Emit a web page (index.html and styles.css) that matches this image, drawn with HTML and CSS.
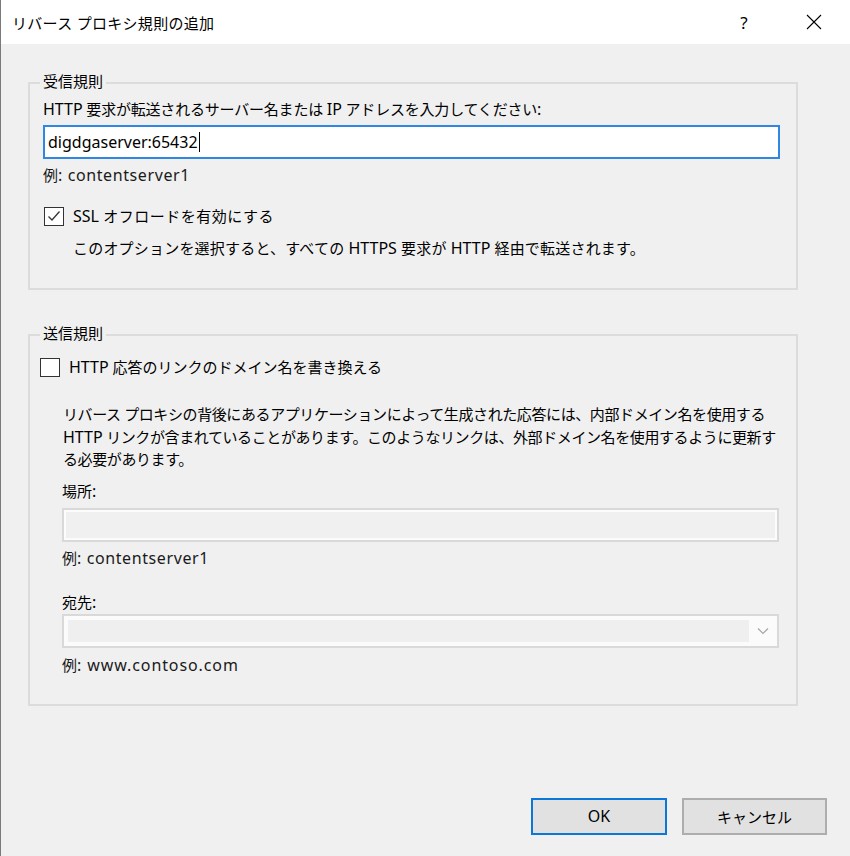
FILE: index.html
```html
<!DOCTYPE html>
<html lang="ja">
<head>
    <meta charset="UTF-8">
    <title>リバース プロキシ規則の追加</title>
    <link rel="stylesheet" href="styles.css">
</head>
<body>
    <div class="dialog">
        <div class="titlebar">
            <span class="tb-title">リバース プロキシ規則の追加</span>
            <span class="tb-help">?</span>
            <span class="tb-close">
                <svg width="16" height="16" viewBox="0 0 16 16"><path d="M1 1L15 15M15 1L1 15" stroke="#000" stroke-width="1.1" fill="none"/></svg>
            </span>
        </div>
        <div class="content">
            <fieldset class="group group-in">
                <legend>受信規則</legend>
                <p class="row lbl"><span class="en">HTTP</span> 要求が転送されるサーバー名または <span class="en">IP</span> アドレスを入力してください<span class="en">:</span></p>
                <div class="input active"><span class="en">digdgaserver:65432</span><span class="caret"></span></div>
                <p class="row hint">例<span class="en">: contentserver1</span></p>
                <div class="row check check-ssl">
                    <span class="box">
                        <svg width="14" height="14" viewBox="0 0 14 14"><path d="M1.5 7.5L5 11L12.5 2.5" stroke="#333" stroke-width="1.3" fill="none"/></svg>
                    </span>
                    <span><span class="en">SSL</span> オフロードを有効にする</span>
                </div>
                <p class="row desc">このオプションを選択すると、すべての <span class="en">HTTPS</span> 要求が <span class="en">HTTP</span> 経由で転送されます。</p>
            </fieldset>

            <fieldset class="group group-out">
                <legend>送信規則</legend>
                <div class="row check check-rw">
                    <span class="box"></span>
                    <span><span class="en">HTTP</span> 応答のリンクのドメイン名を書き換える</span>
                </div>
                <div class="indent">
                    <p class="para">リバース プロキシの背後にあるアプリケーションによって生成された応答には、内部ドメイン名を使用する<br><span class="en">HTTP</span> リンクが含まれていることがあります。このようなリンクは、外部ドメイン名を使用するように更新す<br>る必要があります。</p>
                    <p class="row lbl-loc">場所<span class="en">:</span></p>
                    <div class="input disabled"></div>
                    <p class="row hint hint-loc">例<span class="en">: contentserver1</span></p>
                    <p class="row lbl-dst">宛先<span class="en">:</span></p>
                    <div class="select">
                        <div class="sel-field"></div>
                        <svg class="sel-arrow" width="12" height="8" viewBox="0 0 12 8"><path d="M1 1.5L6 6.5L11 1.5" stroke="#a6a6a6" stroke-width="1.2" fill="none"/></svg>
                    </div>
                    <p class="row hint hint-dst">例<span class="en">: www.contoso.com</span></p>
                </div>
            </fieldset>

            <div class="footer">
                <a href="#" class="btn btn-ok"><span class="en">OK</span></a>
                <a href="#" class="btn">キャンセル</a>
            </div>
        </div>
    </div>
</body>
</html>
```

FILE: styles.css
```css
html, body {
    margin: 0;
    padding: 0;
}

body {
    font-family: "Noto Sans", "Noto Sans CJK JP", sans-serif;
    font-size: 15px;
    color: #000;
    background-color: #f0f0f0;
}

p {
    margin: 0;
}

a {
    color: #000;
    text-decoration: none;
}

/* latin runs are set a little larger than the kana/kanji */
.en {
    font-size: 16px;
    letter-spacing: 0;
}

.dialog {
    width: 849px;
    height: 856px;
    border-left: 1px solid #7a7a7a;
    background-color: #f0f0f0;
}

.titlebar {
    display: flex;
    align-items: center;
    height: 44px;
    padding-left: 11px;
    background-color: #fff;
}

.tb-title {
    flex: 1;
    font-size: 15px;
    letter-spacing: 0.3px;
}

.tb-help {
    width: 70px;
    margin-left: 4px;
    text-align: center;
    font-size: 17px;
}

.tb-close {
    display: flex;
    justify-content: center;
    width: 70px;
    margin-right: 1px;
}

.content {
    padding: 27px 0 0 27px;
}

.group {
    box-sizing: border-box;
    width: 770px;
    margin: 0;
    border: 2px solid #dcdcdc;
}

.group legend {
    padding: 0 3px 4px;
    line-height: 20px;
    font-size: 15px;
}

.group-in {
    padding: 0 16px 30px 13px;
}

.group-in legend {
    margin-left: -3px;
}

.group-out {
    margin-top: 33px;
    padding: 0 17px 29px 10px;
}

.row {
    line-height: 20px;
    white-space: nowrap;
}

.lbl {
    margin-top: 4px;
    letter-spacing: -0.2px;
}

.input {
    box-sizing: border-box;
    height: 34px;
    border: 2px solid #d9d9d9;
}

.input.active {
    display: flex;
    align-items: center;
    margin-top: 6px;
    padding-left: 3px;
    border-color: #2f87e3;
    background-color: #fff;
}

.caret {
    display: inline-block;
    width: 1px;
    height: 20px;
    margin-left: 1px;
    background-color: #000;
}

.input.disabled {
    margin-top: 7px;
    background-color: #f0f0f0;
    box-shadow: inset 0 0 0 2px #fcfcfc;
}

.hint {
    margin-top: 6px;
    color: #1a1a1a;
}

.hint .en {
    letter-spacing: 0.6px;
}

.hint-dst .en {
    letter-spacing: 0.9px;
}

.check {
    display: flex;
    align-items: center;
}

.check .box {
    box-sizing: border-box;
    display: flex;
    align-items: center;
    justify-content: center;
    width: 20px;
    height: 19px;
    border: 1px solid #333;
    background-color: #fff;
}

.check-ssl {
    margin-top: 21px;
    margin-left: 1px;
    letter-spacing: 0.5px;
}

.check-ssl .box {
    margin-right: 9px;
}

.check-rw {
    margin-top: 10px;
}

.check-rw .box {
    margin-right: 9px;
}

.desc {
    margin-top: 12px;
    padding-left: 30px;
    letter-spacing: 0.2px;
}

.indent {
    padding-left: 22px;
}

.para {
    margin-top: 26px;
    padding-left: 1px;
    line-height: 22.5px;
    white-space: nowrap;
    letter-spacing: -0.4px;
}

.lbl-loc {
    margin-top: 10px;
}

.hint-loc {
    margin-top: 6px;
}

.lbl-dst {
    margin-top: 24px;
}

.select {
    box-sizing: border-box;
    display: flex;
    align-items: center;
    height: 34px;
    margin-top: 2px;
    padding: 4px;
    border: 2px solid #d9d9d9;
    background-color: #fbfbfb;
}

.sel-field {
    flex: 1;
    height: 100%;
    background-color: #efefef;
}

.sel-arrow {
    margin: 0 4px 0 8px;
}

.hint-dst {
    margin-top: 7px;
}

.footer {
    display: flex;
    justify-content: flex-end;
    gap: 15px;
    width: 799px;
    margin-top: 92px;
}

.btn {
    box-sizing: border-box;
    display: flex;
    align-items: center;
    justify-content: center;
    width: 145px;
    height: 37px;
    border: 2px solid #adadad;
    background-color: #e1e1e1;
    font-size: 15px;
}

.btn-ok {
    width: 136px;
    border-color: #0a78d7;
}
```
